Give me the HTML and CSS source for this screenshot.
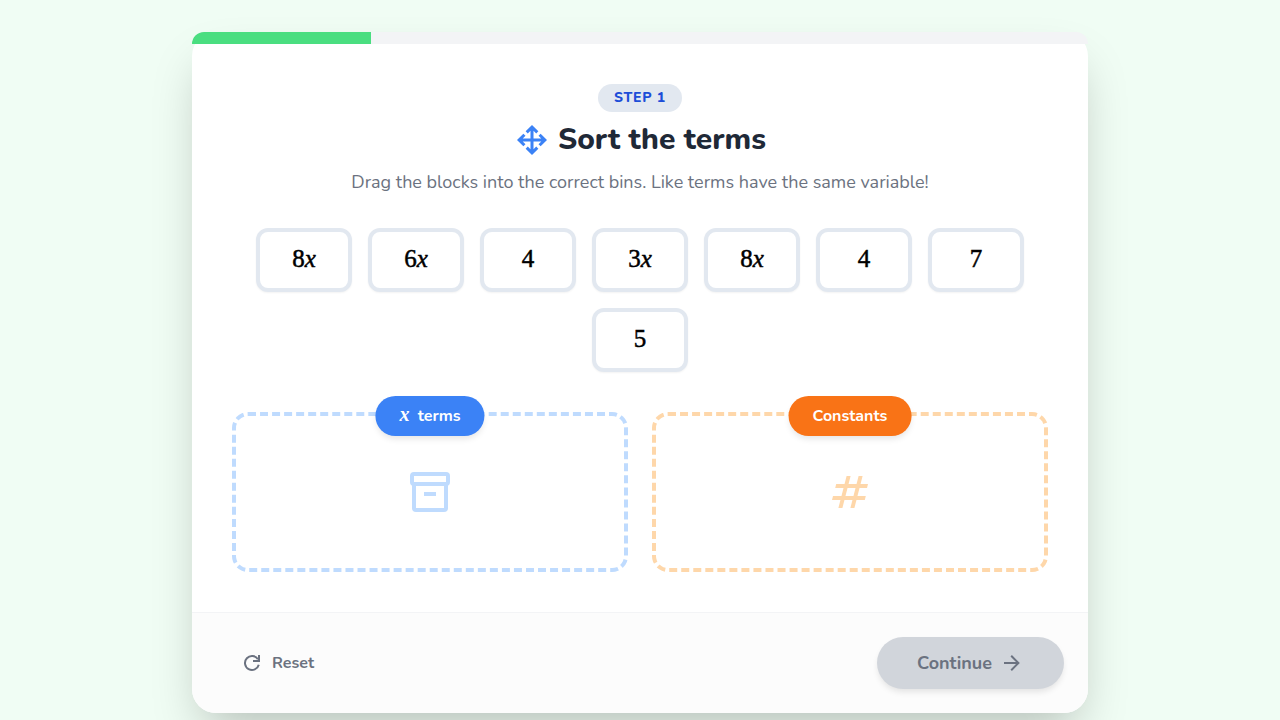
FILE: index.html
```html
<!DOCTYPE html>
<html lang="en">
<head>
  <meta charset="UTF-8">
  <meta name="viewport" content="width=device-width, initial-scale=1.0">
  <title>Sort the terms</title>
  <link rel="stylesheet" href="styles.css">
</head>
<body>
  <main class="card">
    <div class="progress">
      <div class="progress-fill" style="width: 20%"></div>
    </div>

    <section class="content">
      <header class="intro">
        <span class="step-badge">STEP 1</span>
        <h1>
          <svg class="icon-title" viewBox="0 0 24 24" aria-hidden="true"><path d="M11 11V5.828L9.172 7.657 7.757 6.243 12 2l4.243 4.243-1.415 1.414L13 5.828V11h5.172l-1.829-1.828 1.414-1.415L22 12l-4.243 4.243-1.414-1.415L18.172 13H13v5.172l1.828-1.829 1.415 1.414L12 22l-4.243-4.243 1.415-1.414L11 18.172V13H5.828l1.829 1.828-1.414 1.415L2 12l4.243-4.243 1.414 1.415L5.828 11z"/></svg>
          Sort the terms
        </h1>
        <p>Drag the blocks into the correct bins. Like terms have the same variable!</p>
      </header>

      <div class="blocks">
        <button class="block math" draggable="true">8<i>x</i></button>
        <button class="block math" draggable="true">6<i>x</i></button>
        <button class="block math" draggable="true">4</button>
        <button class="block math" draggable="true">3<i>x</i></button>
        <button class="block math" draggable="true">8<i>x</i></button>
        <button class="block math" draggable="true">4</button>
        <button class="block math" draggable="true">7</button>
        <button class="block math" draggable="true">5</button>
      </div>

      <div class="bins">
        <div class="bin bin-x">
          <h2 class="bin-label"><i class="math">x</i> terms</h2>
          <svg class="icon-bin" viewBox="0 0 24 24" fill="none" stroke="currentColor" stroke-width="2" aria-hidden="true"><rect x="3" y="3" width="18" height="5" rx="1"/><path d="M4 8v12a1 1 0 0 0 1 1h14a1 1 0 0 0 1-1V8M9 13h6"/></svg>
        </div>
        <div class="bin bin-constants">
          <h2 class="bin-label">Constants</h2>
          <svg class="icon-bin" viewBox="0 0 24 24" aria-hidden="true"><path d="M10.300 4h2L8.200 20h-2zM16.300 4h2l-4.100 16h-2zM5.100 8H21l-.5 2H4.600zM3.500 14h16.400l-.5 2H3z"/></svg>
        </div>
      </div>
    </section>

    <footer class="actions">
      <button class="reset-button">
        <svg class="icon" viewBox="0 0 24 24" fill="none" stroke="currentColor" stroke-width="2" aria-hidden="true"><path d="M19 4v6h-6M17.900 8.250A7 7 0 1 0 18.780 13.750"/></svg>
        Reset
      </button>
      <button class="continue-button" disabled>
        Continue
        <svg class="icon" viewBox="0 0 24 24" aria-hidden="true"><path d="M4 11v2h12l-5.500 5.500 1.420 1.420L19.840 12l-7.920-7.920L10.500 5.500 16 11z"/></svg>
      </button>
    </footer>
  </main>
</body>
</html>
```
FILE: styles.css
```css
:root {
  --bg-color: #f0fdf4;
  --blue: #3b82f6;
  --blue-light: #bfdbfe;
  --orange: #f97316;
  --orange-light: #fed7aa;
  --slate: #e2e8f0;
  --gray: #6b7280;
}

* {
  margin: 0;
  padding: 0;
  box-sizing: border-box;
}

body {
  font-family: "Nunito", "Lato", sans-serif;
  background-color: var(--bg-color);
  padding: 32px 16px;
  min-height: 100vh;
}

button {
  font-family: inherit;
  border: none;
  cursor: pointer;
}

svg {
  flex-shrink: 0;
}

svg:not([fill]) {
  fill: currentColor;
}

.card {
  max-width: 896px;
  margin: 0 auto;
  background-color: white;
  border-radius: 24px;
  box-shadow: 0 25px 50px -12px rgba(0, 0, 0, 0.25);
}

/* Progress bar */
.progress {
  height: 12px;
  background-color: #f3f4f6;
  border-radius: 12px 12px 0 0;
  overflow: hidden;
}

.progress-fill {
  height: 100%;
  background-color: #4ade80;
}

.content {
  padding: 40px;
}

/* Heading */
.intro {
  display: flex;
  flex-direction: column;
  align-items: center;
  gap: 10px;
  text-align: center;
  margin-bottom: 32px;
}

.step-badge {
  padding: 4px 16px;
  border-radius: 14px;
  background-color: var(--slate);
  color: #1d4ed8;
  font-size: 14px;
  line-height: 20px;
  font-weight: 800;
  letter-spacing: 0.05em;
}

h1 {
  display: flex;
  align-items: center;
  justify-content: center;
  gap: 8px;
  font-size: 30px;
  line-height: 36px;
  font-weight: 800;
  color: #1f2937;
}

.icon-title {
  width: 36px;
  height: 36px;
  color: var(--blue);
}

.intro p {
  font-size: 18px;
  line-height: 28px;
  color: var(--gray);
}

/* Draggable blocks */
.math {
  font-family: "KaTeX_Main", "Liberation Serif", serif;
}

.blocks {
  display: flex;
  flex-wrap: wrap;
  justify-content: center;
  gap: 16px;
  margin-bottom: 40px;
}

.block {
  width: 96px;
  height: 64px;
  padding-bottom: 2px;
  border: 4px solid var(--slate);
  border-radius: 12px;
  background-color: white;
  box-shadow: 0 1px 2px rgba(0, 0, 0, 0.05);
  font-size: 25px;
  line-height: 28px;
  color: black;
  -webkit-text-stroke: 0.02em currentColor;
  cursor: grab;
}

/* Bins */
.bins {
  display: grid;
  grid-template-columns: 1fr 1fr;
  gap: 24px;
}

.bin {
  position: relative;
  display: flex;
  align-items: center;
  justify-content: center;
  min-height: 160px;
  border: 4px dashed;
  border-radius: 16px;
}

.bin-x {
  color: var(--blue-light);
}

.bin-constants {
  color: var(--orange-light);
}

.bin-label {
  position: absolute;
  top: -20px;
  left: 50%;
  transform: translateX(-50%);
  padding: 8px 24px;
  border-radius: 20px;
  box-shadow: 0 4px 6px -1px rgba(0, 0, 0, 0.1);
  color: white;
  font-size: 16px;
  line-height: 24px;
  font-weight: 700;
  white-space: nowrap;
}

.bin-label .math {
  font-size: 20px;
  line-height: 20px;
  margin-right: 4px;
}

.bin-x .bin-label {
  background-color: var(--blue);
}

.bin-constants .bin-label {
  background-color: var(--orange);
}

.icon-bin {
  width: 48px;
  height: 48px;
}

/* Footer */
.actions {
  display: flex;
  justify-content: space-between;
  align-items: center;
  padding: 24px;
  border-top: 1px solid #f3f4f6;
  border-radius: 0 0 24px 24px;
  background-color: #fcfcfc;
}

.icon {
  width: 24px;
  height: 24px;
}

.reset-button,
.continue-button {
  display: flex;
  align-items: center;
  gap: 8px;
  font-weight: 700;
  color: var(--gray);
}

.reset-button {
  padding: 12px 24px;
  background: none;
  font-size: 16px;
  line-height: 24px;
}

.continue-button {
  padding: 12px 40px;
  border-radius: 26px;
  background-color: #d1d5db;
  box-shadow: 0 4px 6px -1px rgba(0, 0, 0, 0.1);
  font-size: 18px;
  line-height: 28px;
  cursor: not-allowed;
}

@media (max-width: 640px) {
  .content {
    padding: 24px;
  }

  .bins {
    grid-template-columns: 1fr;
    gap: 40px;
  }
}
```
